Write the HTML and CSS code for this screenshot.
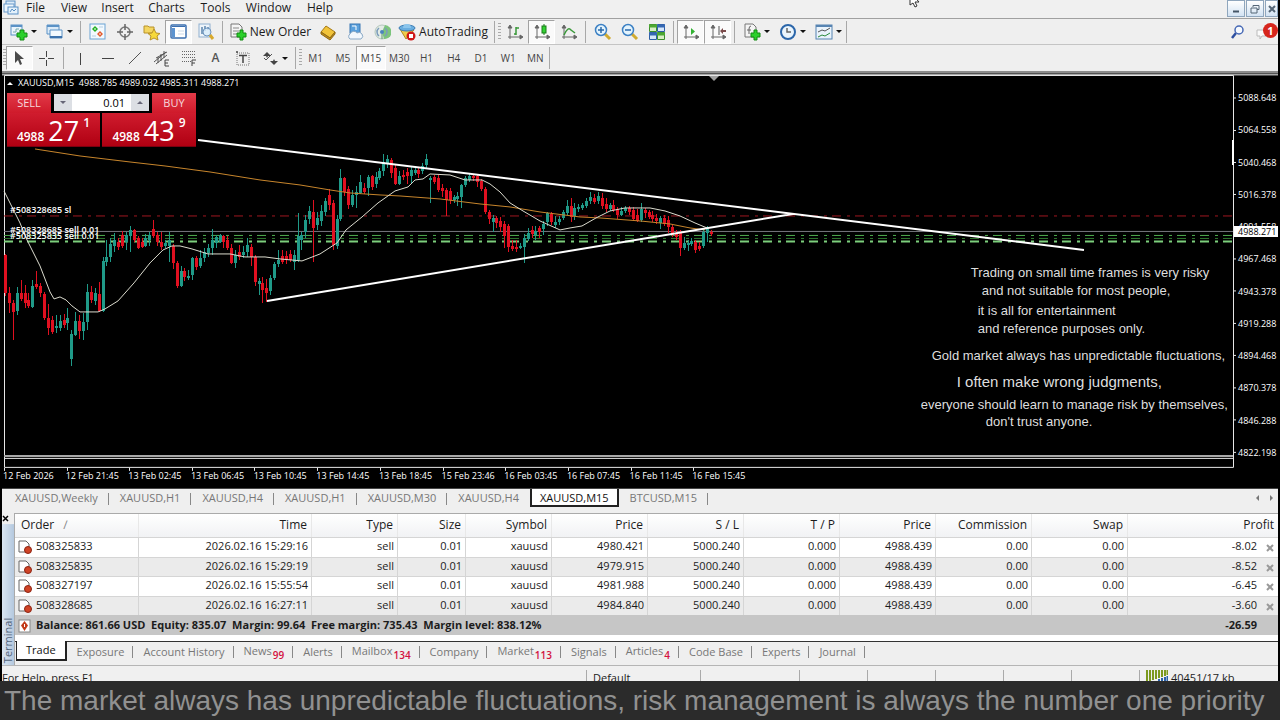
FILE: index.html
```html
<!DOCTYPE html>
<html lang="en">
<head>
<meta charset="utf-8">
<title>XAUUSD,M15</title>
<link rel="stylesheet" href="styles.css">
</head>
<body>
<div class="app">
  <header class="menubar">
    <svg class="logo" width="16" height="16" viewBox="0 0 16 16"><rect x="3" y="1" width="9" height="7" fill="#dcebf8" stroke="#5a8fc4"/><rect x="1" y="4" width="10" height="8" fill="#eef6fc" stroke="#6a9aca"/><rect x="5" y="7" width="10" height="7" fill="#e4f1fb" stroke="#5a8fc4"/><path d="M7 12l2-3 2 2 2-2" fill="none" stroke="#5a8fc4"/></svg>
    <nav class="menus">
      <button>File</button><button>View</button><button>Insert</button><button>Charts</button><button>Tools</button><button>Window</button><button>Help</button>
    </nav>
    <svg class="pointer" width="12" height="8" viewBox="0 0 12 8"><path d="M2 -8V5L5 3L7 7L9 6L7 2H11Z" fill="#fff" stroke="#333"/></svg>
    <div class="winbtns">
      <button aria-label="Minimize"><svg width="10" height="10" viewBox="0 0 10 10"><path d="M2 7.500H8" stroke="#456" stroke-width="2"/></svg></button>
      <button aria-label="Restore"><svg width="10" height="10" viewBox="0 0 10 10"><path d="M3 3V1.500H9V5.500H7M1 4H7V9H1Z" fill="none" stroke="#567"/></svg></button>
      <button aria-label="Close"><svg width="10" height="10" viewBox="0 0 10 10"><path d="M2 2L8 8M8 2L2 8" stroke="#567" stroke-width="2"/></svg></button>
    </div>
  </header>

  <div class="toolbar main-tools">
    <button class="tool drop" aria-label="New chart"><svg width="18" height="18" viewBox="0 0 18 18"><rect x="1" y="2" width="11" height="10" fill="#eaf4fc" stroke="#5b92c6"/><path d="M1 3H12" stroke="#5b92c6" stroke-width="2"/><path d="M3 9h3V6h3" fill="none" stroke="#7aa"/><path d="M10 7H14V10H17V14H14V17H10V14H7V10H10Z" fill="#2bd02b" stroke="#128a12"/></svg><i class="caret"></i></button>
    <button class="tool drop" aria-label="Profiles"><svg width="18" height="18" viewBox="0 0 18 18"><path d="M1 2H13V11H1Z" fill="#dcebf8" stroke="#5b92c6"/><path d="M1 3H13" stroke="#5b92c6" stroke-width="2"/><path d="M4 7H16V15H4Z" fill="#f3f9fe" stroke="#5b92c6"/><path d="M4 14H16" stroke="#3c72ad" stroke-width="2"/></svg><i class="caret"></i></button>
    <i class="sep"></i>
    <button class="tool" aria-label="Market Watch"><svg width="18" height="18" viewBox="0 0 18 18"><rect x="1" y="1" width="15" height="15" fill="#f2f9fe" stroke="#6ba3d4"/><path d="M6 3L9 6L6 9L3 6Z" fill="#22b022"/><path d="M11 8L14 11L11 14L8 11Z" fill="#e25a2c"/><path d="M6 5V7M11 10V12" stroke="#fff"/><path d="M10 4H14M3 13H7" stroke="#b7cfe2"/></svg></button>
    <button class="tool" aria-label="Data Window"><svg width="18" height="18" viewBox="0 0 18 18"><circle cx="9" cy="9" r="5" fill="none" stroke="#777" stroke-width="1.500"/><path d="M9 1V7M9 11V17M1 9H7M11 9H17" stroke="#666" stroke-width="1.500"/></svg></button>
    <button class="tool" aria-label="Navigator"><svg width="18" height="18" viewBox="0 0 18 18"><path d="M1 3H5L6 4H11V10H1Z" fill="#f4d660" stroke="#b8922a"/><path d="M11 6L13 10L17 10.500L14 13L15 17L11 15L7 17L8 13L5 10.500L9 10Z" fill="#f7d93a" stroke="#b8922a"/></svg></button>
    <button class="tool on" aria-label="Terminal"><svg width="18" height="18" viewBox="0 0 18 18"><rect x="1" y="2" width="15" height="13" rx="1" fill="#fff" stroke="#3b6fb0" stroke-width="1.500"/><path d="M2 3.500H15" stroke="#3b6fb0"/><rect x="2" y="5" width="3" height="9" fill="#5c93d0"/><path d="M8 8H14M8 11H14" stroke="#cbd9e8"/></svg></button>
    <button class="tool" aria-label="Strategy Tester"><svg width="18" height="18" viewBox="0 0 18 18"><rect x="2" y="1" width="11" height="13" fill="#eef4fa" stroke="#8fb0d0"/><path d="M5 4V11M8 3V8M11 4V7" stroke="#7fa0c0" stroke-width="2"/><circle cx="10" cy="9" r="4" fill="#d8ecfa" fill-opacity=".8" stroke="#6d94bd"/><path d="M13 12L16 16" stroke="#d8a92c" stroke-width="3"/></svg></button>
    <i class="sep"></i>
    <button class="tool text"><svg width="18" height="18" viewBox="0 0 18 18"><path d="M2 1H10L13 4V14H2Z" fill="#f4f4f4" stroke="#777"/><path d="M4 5H10M4 8H10M4 11H8" stroke="#888"/><path d="M11 7H14V10H17V14H14V17H11V14H8V10H11Z" fill="#2bd02b" stroke="#128a12"/></svg>New Order</button>
    <button class="tool" aria-label="MetaEditor"><svg width="18" height="18" viewBox="0 0 18 18"><path d="M2 9L7 3L16 9L11 15Z" fill="#f2c43a" stroke="#a57916"/><path d="M2 9V11L11 17L16 11V9L11 15Z" fill="#c68f1c" stroke="#8f6a14"/></svg></button>
    <button class="tool" aria-label="Cloud"><svg width="18" height="18" viewBox="0 0 18 18"><rect x="4" y="1" width="10" height="9" fill="#5aa0dc" stroke="#3876b4"/><path d="M6 3H10V7" stroke="#fff" fill="none"/><path d="M4 16A3 3 0 0 1 4 11A4 4 0 0 1 11 10A3 3 0 0 1 15 16Z" fill="#f3f8fd" stroke="#8aa9c6"/></svg></button>
    <button class="tool" aria-label="Signals"><svg width="18" height="18" viewBox="0 0 18 18"><circle cx="9" cy="9" r="7" fill="#e3ebe6" stroke="#b3c6bc"/><path d="M9 9L12 2A7 7 0 0 1 11 16Z" fill="#7cc47c"/><path d="M6 5A5 5 0 0 0 6 13M12 5A5 5 0 0 1 12 13" fill="none" stroke="#7b9bbb" stroke-width="1.500"/><circle cx="9" cy="9" r="2" fill="#4b83bd"/><path d="M9 11V16" stroke="#5f9a6a"/></svg></button>
    <button class="tool text auto"><svg width="18" height="18" viewBox="0 0 18 18"><path d="M2 6L8 16L16 7Z" fill="#f0cd4a" stroke="#b08c22"/><ellipse cx="9" cy="5" rx="8" ry="3" fill="#69aee0" stroke="#3b7cb4"/><path d="M5 5A4 4 0 0 1 13 5Z" fill="#8bc5ec"/><circle cx="13" cy="13" r="4.500" fill="#cf1717"/><rect x="11" y="11" width="4" height="4" fill="#fff"/></svg>AutoTrading</button>
    <i class="sep"></i><i class="grip"></i>
    <button class="tool" aria-label="Bar chart"><svg width="18" height="18" viewBox="0 0 18 18"><path d="M4 3V16M2 14H16M4 2L2 5H6ZM17 14L14 12V16Z" fill="#666" stroke="#666"/><path d="M10 4V12M10 5H13M8 11H10" stroke="#3a993a" stroke-width="1.500"/></svg></button>
    <button class="tool on" aria-label="Candlesticks"><svg width="18" height="18" viewBox="0 0 18 18"><path d="M4 3V16M2 14H16M4 2L2 5H6ZM17 14L14 12V16Z" fill="#666" stroke="#666"/><path d="M11 1V12" stroke="#187a18"/><rect x="9" y="3" width="4" height="7" fill="#32d232" stroke="#187a18"/></svg></button>
    <button class="tool" aria-label="Line chart"><svg width="18" height="18" viewBox="0 0 18 18"><path d="M4 3V16M2 14H16M4 2L2 5H6ZM17 14L14 12V16Z" fill="#666" stroke="#666"/><path d="M4 12Q8 3 11 7L15 10" fill="none" stroke="#3a993a" stroke-width="1.500"/></svg></button>
    <i class="sep"></i>
    <button class="tool" aria-label="Zoom in"><svg width="18" height="18" viewBox="0 0 18 18"><path d="M11 11L16 16" stroke="#d1ab2f" stroke-width="3"/><circle cx="7" cy="7" r="5.500" fill="#e4f4fd" stroke="#3c80c4" stroke-width="1.500"/><path d="M4 7H10M7 4V10" stroke="#2a69ab" stroke-width="1.500"/></svg></button>
    <button class="tool" aria-label="Zoom out"><svg width="18" height="18" viewBox="0 0 18 18"><path d="M11 11L16 16" stroke="#d1ab2f" stroke-width="3"/><circle cx="7" cy="7" r="5.500" fill="#e4f4fd" stroke="#3c80c4" stroke-width="1.500"/><path d="M4 7H10" stroke="#2a69ab" stroke-width="1.500"/></svg></button>
    <button class="tool" aria-label="Tile windows"><svg width="18" height="18" viewBox="0 0 18 18"><path d="M1.500 1.500H8.500V8.500H1.500ZM9.500 9.500H16.500V16.500H9.500Z" fill="#d7efc5" stroke="#3c8f2c"/><path d="M1 3H9M9 11H17" stroke="#4ca832" stroke-width="3"/><path d="M9.500 1.500H16.500V8.500H9.500ZM1.500 9.500H8.500V16.500H1.500Z" fill="#d5e6fa" stroke="#2e5ea4"/><path d="M9 3H17M1 11H9" stroke="#3467b2" stroke-width="3"/></svg></button>
    <i class="sep"></i>
    <button class="tool on" aria-label="Auto scroll"><svg width="18" height="18" viewBox="0 0 18 18"><path d="M4 3V16M2 14H16M4 2L2 5H6ZM17 14L14 12V16Z" fill="#666" stroke="#666"/><path d="M9 5L13 8.500L9 12Z" fill="#32b232"/></svg></button>
    <button class="tool on" aria-label="Chart shift"><svg width="18" height="18" viewBox="0 0 18 18"><path d="M4 3V16M2 14H16M4 2L2 5H6ZM17 14L14 12V16Z" fill="#666" stroke="#666"/><path d="M10 3V12" stroke="#555"/><path d="M11 8L14 5V7H17V9H14V11Z" fill="#7a4a4a"/></svg></button>
    <i class="sep"></i>
    <button class="tool drop" aria-label="Indicators"><svg width="18" height="18" viewBox="0 0 18 18"><path d="M2 1H10L13 4V14H2Z" fill="#f4f4f4" stroke="#777"/><path d="M8 3Q6 3 6 6V11M4 7H8" fill="none" stroke="#666"/><path d="M11 7H14V10H17V14H14V17H11V14H8V10H11Z" fill="#2bd02b" stroke="#128a12"/></svg><i class="caret"></i></button>
    <button class="tool drop" aria-label="Periods"><svg width="18" height="18" viewBox="0 0 18 18"><circle cx="9" cy="9" r="7" fill="#eaf5fd" stroke="#2b66aa" stroke-width="2"/><path d="M8 5V9H12" fill="none" stroke="#666" stroke-width="1.500"/></svg><i class="caret"></i></button>
    <button class="tool drop" aria-label="Templates"><svg width="18" height="18" viewBox="0 0 18 18"><rect x="1" y="2" width="16" height="14" fill="#eaf3fb" stroke="#5784b2"/><path d="M1 3H17" stroke="#5784b2" stroke-width="2"/><path d="M3 9L7 7L10 8L15 5" fill="none" stroke="#555"/><path d="M3 14L7 12L10 13L15 10" fill="none" stroke="#2a8a3a"/></svg><i class="caret"></i></button>
    <i class="sep end"></i>
    <div class="right-tools">
      <button class="tool" aria-label="Search"><svg width="18" height="18" viewBox="0 0 18 18"><path d="M7 10L3 15" stroke="#2d4fa0" stroke-width="2.500"/><circle cx="10" cy="7" r="4" fill="#f6faff" stroke="#4668b4" stroke-width="1.500"/></svg></button>
      <button class="tool notes" aria-label="Notifications"><svg width="18" height="18" viewBox="0 0 18 18"><path d="M1 7H10V13H6L4 16V13H1Z" fill="#fafafa" stroke="#bbb"/></svg><b class="badge">1</b></button>
    </div>
  </div>

  <div class="toolbar draw-tools">
    <i class="grip"></i>
    <button class="tool on" aria-label="Cursor"><svg width="18" height="18" viewBox="0 0 18 18"><path d="M4 2V14L7 11L9 16L11 15L9 10H13Z" fill="#4a4a4a"/></svg></button>
    <button class="tool" aria-label="Crosshair"><svg width="18" height="18" viewBox="0 0 18 18"><path d="M8.500 2V8M8.500 11V17M1 9.500H7M10 9.500H16" stroke="#444"/></svg></button>
    <i class="sep"></i>
    <button class="tool" aria-label="Vertical line"><svg width="18" height="18" viewBox="0 0 18 18"><path d="M8.500 4V16" stroke="#444"/></svg></button>
    <button class="tool" aria-label="Horizontal line"><svg width="18" height="18" viewBox="0 0 18 18"><path d="M3 9.500H15" stroke="#444"/></svg></button>
    <button class="tool" aria-label="Trendline"><svg width="18" height="18" viewBox="0 0 18 18"><path d="M3 15L15 3" stroke="#555"/></svg></button>
    <button class="tool" aria-label="Channel"><svg width="18" height="18" viewBox="0 0 18 18"><path d="M1 13L13 3M3 15L14 6M3 9L14 3M5 14V8M8 12V5M11 9V2" stroke="#555"/><path d="M16 11H12V17H16M12 14H15" fill="none" stroke="#444"/></svg></button>
    <button class="tool" aria-label="Fibonacci"><svg width="18" height="18" viewBox="0 0 18 18"><path d="M2 2.500H16M2 5.500H16M2 8.500H16M2 12.500H11" stroke="#666" stroke-dasharray="1 1"/><path d="M16 11H12V17M12 14H15" fill="none" stroke="#444"/></svg></button>
    <button class="tool letter">A</button>
    <button class="tool" aria-label="Text label"><svg width="18" height="18" viewBox="0 0 18 18"><rect x="3" y="4" width="12" height="12" fill="none" stroke="#777" stroke-dasharray="1 1"/><path d="M5 6.500H13M9 6V14M2 3H4" stroke="#444" stroke-width="1.500"/></svg></button>
    <button class="tool drop" aria-label="Arrows"><svg width="18" height="18" viewBox="0 0 18 18"><path d="M6 3L10 7H7L6 9L5 7H2Z" fill="#444"/><path d="M3 9L5 11L11 5" fill="none" stroke="#555"/><path d="M9 12H12L13 10L14 12H17L13 16Z" fill="#444"/></svg><i class="caret"></i></button>
    <i class="sep"></i><i class="grip"></i>
    <div class="periods">
      <button>M1</button><button>M5</button><button class="on">M15</button><button>M30</button><button>H1</button><button>H4</button><button>D1</button><button>W1</button><button>MN</button>
    </div>
    <i class="sep end"></i>
  </div>

  <main class="chart">
    <svg class="plot" viewBox="2 73 1276 415" preserveAspectRatio="none">
      <path class="edge" d="M2 74.500H1278"/>
      <path class="frame" d="M4.500 467.500V75.500H1233.500V467.500ZM4 458.500H1233"/>
      <path class="edge" d="M4 456H1233"/>
      <path d="M1233 140V165" stroke="#fff" stroke-width="2"/>
      <path d="M709 76H719L714 81Z" fill="#a0a0a0"/>
      <path class="frame" d="M1234 98H1236M1234 130.500H1236M1234 162.500H1236M1234 194.500H1236M1234 227H1236M1234 259H1236M1234 291H1236M1234 323.500H1236M1234 355.500H1236M1234 388H1236M1234 420H1236M1234 452.500H1236M4.500 468V471M67.500 468V471M129.500 468V471M192.500 468V471M254.500 468V471M317.500 468V471M380.500 468V471M443.500 468V471M505.500 468V471M568.500 468V471M631.500 468V471M693.500 468V471"/>
      <path d="M4 231.500H1233" stroke="#77777f"/>
      <path class="level stop" d="M4 216H1233"/>
      <path class="level open" d="M4 235.500H1233"/>
      <path class="level open dim" d="M4 238.500H1233"/>
      <path class="level open strong" d="M4 241.500H1233"/>
      <g id="candles"></g>
      <polyline class="ma slow" points="35,149 80,156 130,162 165,166 210,172 260,180 300,185 330,190 350,193 380,195 400,196 440,199 480,204 510,207 540,212 580,217 600,218 640,221 670,224 690,228 705,230"/>
      <polyline class="ma" points="4,191 20,223 27,240 40,266 50,292 54,299 60,297 66,300 72,306 80,312 98,312 105,309 118,301 134,283 150,263 163,250 172,246 180,246 192,249 208,254 230,254 245,257 265,257 280,259 302,261 320,254 337,243 346,230 362,217 378,203 395,191 408,187 415,180 423,179 430,174 450,175 465,180 482,180 490,184 500,192 510,203 523,211 540,221 560,230 570,228 582,226 596,218 610,211 625,208 650,208 665,211 680,216 695,223 707,228"/>
      <path class="trend" d="M198 140L1084 250M267 301L793 214"/>
    </svg>
    <div class="quote"><i class="up"></i><span>XAUUSD,M15&nbsp; 4988.785 4989.032 4985.311 4988.271</span></div>
    <form class="trade">
      <button type="button" class="side">SELL</button>
      <div class="volume">
        <button type="button" aria-label="Less"><i class="mini down"></i></button>
        <input type="text" value="0.01" aria-label="Volume">
        <button type="button" aria-label="More"><i class="mini up"></i></button>
      </div>
      <button type="button" class="side">BUY</button>
      <button type="button" class="price"><small>4988</small><span>27</span><sup>1</sup></button>
      <button type="button" class="price buy"><small>4988</small><span>43</span><sup>9</sup></button>
    </form>
    <span class="order sl">#508328685 sl</span>
    <span class="order first">#508328685 sell 0.01</span>
    <span class="order second">#508325835 sell 0.01</span>
    <div class="notice">
      <p class="n1">Trading on small time frames is very risky</p>
      <p class="n2">and not suitable for most people,</p>
      <p class="n3">it is all for entertainment</p>
      <p class="n4">and reference purposes only.</p>
      <p class="n5">Gold market always has unpredictable fluctuations,</p>
      <p class="n6">I often make wrong judgments,</p>
      <p class="n7">everyone should learn to manage risk by themselves,</p>
      <p class="n8">don't trust anyone.</p>
    </div>
    <div class="prices">
      <span>5088.648</span><span>5064.558</span><span>5040.468</span><span>5016.378</span><span>4991.558</span><span>4967.468</span><span>4943.378</span><span>4919.288</span><span>4894.468</span><span>4870.378</span><span>4846.288</span><span>4822.198</span>
      <b class="last">4988.271</b>
    </div>
    <div class="times">
      <span>12 Feb 2026</span><span>12 Feb 21:45</span><span>13 Feb 02:45</span><span>13 Feb 06:45</span><span>13 Feb 10:45</span><span>13 Feb 14:45</span><span>13 Feb 18:45</span><span>15 Feb 23:46</span><span>16 Feb 03:45</span><span>16 Feb 07:45</span><span>16 Feb 11:45</span><span>16 Feb 15:45</span>
    </div>
  </main>

  <nav class="chart-tabs">
    <button>XAUUSD,Weekly</button><button>XAUUSD,H1</button><button>XAUUSD,H4</button><button>XAUUSD,H1</button><button>XAUUSD,M30</button><button>XAUUSD,H4</button><button class="active">XAUUSD,M15</button><button>BTCUSD,M15</button>
    <div class="scrollers"><i class="arrow left"></i><i class="arrow right"></i></div>
  </nav>

  <section class="terminal">
    <aside class="handle"><button aria-label="Close terminal"><svg width="7" height="7" viewBox="0 0 7 7"><path d="M1 1L6 6M6 1L1 6" stroke="#000" stroke-width="1.500"/></svg></button><span>Terminal</span></aside>
    <div class="panel">
      <table>
        <colgroup><col class="c-order"><col class="c-time"><col class="c-mid"><col class="c-size"><col class="c-mid"><col class="c-num"><col class="c-num"><col class="c-num"><col class="c-num"><col class="c-num"><col class="c-num"><col></colgroup>
        <thead><tr><th>Order <i class="sort">∕</i></th><th>Time</th><th>Type</th><th>Size</th><th>Symbol</th><th>Price</th><th>S / L</th><th>T / P</th><th>Price</th><th>Commission</th><th>Swap</th><th>Profit</th></tr></thead>
        <tbody id="orders"></tbody>
        <tfoot><tr><td colspan="11"><svg width="14" height="14" viewBox="0 0 14 14"><rect x="1" y="1" width="11" height="12" fill="#fff" stroke="#888"/><path d="M6.500 2L10 6.500L6.500 12L3 6.500Z" fill="#c33a18"/><path d="M6.500 5V8" stroke="#fff"/></svg><span>Balance: 861.66 USD&nbsp; Equity: 835.07&nbsp; Margin: 99.64&nbsp; Free margin: 735.43&nbsp; Margin level: 838.12%</span></td><td>-26.59</td></tr></tfoot>
      </table>
      <nav class="terminal-tabs">
        <button class="active">Trade</button><button>Exposure</button><button>Account History</button><button>News<sub>99</sub></button><button>Alerts</button><button>Mailbox<sub>134</sub></button><button>Company</button><button>Market<sub>113</sub></button><button>Signals</button><button>Articles<sub>4</sub></button><button>Code Base</button><button>Experts</button><button>Journal</button>
      </nav>
    </div>
  </section>

  <div class="status">
    <span class="help">For Help, press F1</span><span class="profile">Default</span><span class="s3"></span><span class="s2"></span><span class="s2"></span><span class="s2"></span><span class="s2"></span><span class="s2"></span>
    <span class="net"><svg width="22" height="14" viewBox="0 0 22 14"><path d="M1 0V12M4 0V11M7 0V10M10 0V9M13 0V8M16 0V7M19 0V6M21.500 0V5" stroke="#7c9a1e" stroke-width="2"/><path d="M10 14V11M13 14V9M16 14V8M19 14V7M21.500 14V6" stroke="#2c62a8" stroke-width="2"/></svg>40451/17 kb</span>
  </div>
</div>
<footer class="ticker">The market always has unpredictable fluctuations, risk management is always the number one priority</footer>
<script src="app.js"></script>
</body>
</html>
```
FILE: styles.css
```css
* { box-sizing: border-box; }
body { margin: 0; height: 100vh; min-height: 720px; display: flex; flex-direction: column; overflow: hidden; background: #000; font: 12px/16px "Open Sans", "Noto Sans", sans-serif; color: #1c1c1c; }
button { margin: 0; padding: 0; border: 0; background: none; font: inherit; color: inherit; white-space: nowrap; }
svg { display: block; flex: none; }
.app { flex: 1; min-height: 0; display: flex; flex-direction: column; padding: 0 2px; overflow: hidden; }

.menubar { height: 19px; flex: none; display: flex; align-items: flex-start; background: #f0f0f0; border-bottom: 1px solid #a0a0a0; position: relative; }
.logo { margin-left: 1px; }
.menus { display: grid; grid-template-columns: 33px 44px 43px 55px 43px 63px 40px; flex: 1; justify-items: center; }
.pointer { position: absolute; left: 71%; top: 0; }
.winbtns { display: flex; gap: 1px; }
.winbtns button { width: 18px; height: 17px; border: 1px solid #8fa6bd; background: linear-gradient(#fff, #d3e3f3); display: grid; place-items: center; }
.winbtns button:last-child { width: 13px; overflow: hidden; }

.toolbar { height: 26px; flex: none; display: flex; align-items: center; background: #efefef; border-bottom: 1px solid #c4c4c4; }
.main-tools { padding-left: 3px; }
.draw-tools { height: 28px; padding-left: 1px; border-bottom: 2px solid #8c8c8c; }
.tool { width: 27px; height: 24px; flex: none; display: flex; align-items: center; justify-content: center; }
.drop { width: 36px; gap: 3px; }
.on { background: #fafafa; border: 1px solid #a2a2a2; border-right-color: #fff; border-bottom-color: #fff; }
.text { width: 88px; gap: 3px; }
.auto { width: 96px; }
.caret { border: 3px solid transparent; border-top-color: #111; border-bottom: 0; }
.sep { width: 1px; height: 22px; margin: 0 3px; background: #a8a8a8; flex: none; }
.end { margin-left: 0; }
.grip { width: 3px; height: 18px; flex: none; background: repeating-linear-gradient(#aaa 0 1px, #efefef 1px 3px); }
.right-tools { margin-left: auto; display: flex; }
.notes { position: relative; }
.badge { position: absolute; right: 0; top: 3px; width: 15px; height: 15px; border-radius: 8px; background: #d6261c; color: #fff; font-size: 11px; line-height: 15px; }
.letter { font-weight: 600; color: #555; }
.periods { width: 247px; height: 24px; display: flex; font-size: 10px; color: #444; }
.periods button { flex: 1; }

.chart { flex: 1; min-height: 380px; position: relative; background: #000; color: #fff; font-size: 9px; line-height: 12px; }
.plot { position: absolute; width: 100%; height: 100%; fill: none; }
.edge { stroke: #a8a8a8; stroke-width: 2; }
.frame { stroke: #e8e8e8; }
.level { stroke-dasharray: 9 6 3 5; }
.stop { stroke: #a01620; stroke-width: 1; }
.open { stroke: #4fae4f; }
.dim { stroke: #2f7a2f; }
.strong { stroke: #7ccf7c; stroke-width: 2; }
.rise { fill: #1f9a88; }
.fall { fill: #e01020; }
.ma { stroke: #dcdccf; }
.slow { stroke: #c8862c; }
.trend { stroke: #fff; stroke-width: 2; }
.quote { position: absolute; left: 5px; top: 4px; display: flex; align-items: center; gap: 5px; }
.quote .up { border: 3px solid transparent; border-bottom-color: #fff; border-top: 0; }
.trade { position: absolute; left: 5px; top: 20px; width: 189px; display: grid; grid-template-columns: 44px 50px 51px 44px; grid-template-rows: 20px 34px; }
.side { background: linear-gradient(#e23a48, #cf1a2b); color: #f6d9dc; font-size: 11px; }
.volume { grid-column: span 2; display: flex; margin: 1px 3px 2px; background: #fff; font-size: 11px; }
.volume button { width: 18px; background: #dcdfe4; display: grid; place-items: center; flex: none; }
.volume input { flex: 1; min-width: 0; border: 0; padding: 0 6px; font: inherit; text-align: right; }
.mini { border: 3px solid transparent; }
.mini.down { border-top-color: #667; border-bottom: 0; }
.mini.up { border-bottom-color: #667; border-top: 0; }
.price { grid-column: span 2; display: flex; justify-content: center; margin-right: 1px; background: linear-gradient(#d01c2e, #b00012); color: #fff; border-bottom: 1px solid #7c0010; }
.price.buy { margin: 0 0 0 1px; }
.price small { font-size: 12px; line-height: 16px; font-weight: 600; margin-top: 16px; }
.price span { font-size: 27px; line-height: 36px; margin: 0 4px; }
.price sup { font-size: 12px; line-height: 16px; font-weight: 600; margin-top: 2px; }
.order { position: absolute; left: 8px; font-weight: 600; }
.sl { top: 131px; }
.first { top: 151px; }
.second { top: 157px; }
.notice { position: absolute; left: 72%; top: 191px; font: 13px/18px "Liberation Sans", sans-serif; color: #dedede; white-space: nowrap; }
.notice p { margin: 0; }
.n1 { padding-left: 50px; }
.n2 { padding-left: 61px; }
.notice .n3 { padding-left: 57px; margin-top: 2px; }
.n4 { padding-left: 57px; }
.notice .n5 { padding-left: 11px; margin-top: 9px; }
.notice .n6 { padding-left: 36px; margin-top: 8px; font-size: 15px; }
.notice .n7 { margin-top: 6px; line-height: 16px; }
.n8 { padding-left: 65px; }
.prices { position: absolute; right: 0; top: 19px; bottom: 29px; width: 40px; display: flex; flex-direction: column; justify-content: space-between; }
.last { position: absolute; left: -4px; right: 0; top: 134px; padding-left: 4px; height: 11px; line-height: 11px; background: #fff; color: #000; font-weight: 400; }
.times { position: absolute; left: 1px; right: 0; bottom: 6px; display: flex; }
.times span { width: 4.915%; white-space: nowrap; }

.chart-tabs { height: 25px; flex: none; display: flex; align-items: flex-start; padding-left: 2px; background: #efefef; border-top: 1px solid #444; color: #777; font-size: 11px; }
.chart-tabs button { height: 18px; padding: 0 11px; position: relative; line-height: 18px; }
.chart-tabs button:not(.active)::after, .terminal-tabs button:not(.active)::after { content: ""; position: absolute; right: 0; top: 4px; height: 12px; width: 1px; background: #888; }
.chart-tabs button:nth-child(6)::after { display: none; }
.chart-tabs .active { background: #fff; color: #111; border: 2px solid #222; border-top: 0; padding: 0 8px; }
.scrollers { margin-left: auto; display: flex; gap: 11px; padding: 6px 2px; }
.arrow { border: 3px solid transparent; }
.left { border-right-color: #777; }
.right { border-left-color: #777; }

.terminal { flex: none; display: flex; background: #efefef; border-bottom: 1px solid #b5b5b5; }
.handle { width: 12px; display: flex; flex-direction: column; flex: none; }
.handle button { height: 11px; }
.handle span { flex: 1; writing-mode: vertical-rl; transform: rotate(180deg); background: linear-gradient(90deg, #b4c8de, #dae6f2); color: #53647a; line-height: 12px; font-size: 11px; padding-top: 2px; }
.panel { flex: 1; min-width: 0; background: #fff; border-left: 1px solid #aaa; border-top: 1px solid #aaa; }
table { width: 100%; table-layout: fixed; border-collapse: separate; border-spacing: 0; }
.c-order { width: 124px; }
.c-time { width: 173px; }
.c-mid { width: 86px; }
.c-size { width: 68px; }
.c-num { width: 96px; }
th, td { padding: 0 3px 0 6px; text-align: right; font-weight: 400; white-space: nowrap; border-right: 1px solid #d5d5d5; }
th { height: 23px; padding-right: 4px; border-right-color: #e8e8e8; background: linear-gradient(#fff, #f1f2f4); }
th:first-child { text-align: left; }
.sort { margin-left: 6px; color: #888; font-style: normal; }
td { height: 20px; font-size: 11px; border-top: 1px solid #d5d5d5; line-height: 16px; padding-bottom: 2px; }
tbody tr:nth-child(even) { background: #ebebeb; }
tbody tr:nth-child(even) td { height: 19px; }
td:first-child { text-align: left; padding-left: 3px; }
td svg { display: inline-block; vertical-align: middle; margin-right: 4px; }
th:last-child, td:last-child { border-right: 0; }
td:last-child { padding-right: 21px; position: relative; }
.remove { position: absolute; right: 4px; top: 6px; }
.remove svg { display: block; margin: 0; }
tfoot td { background: #c6c6c6; font-weight: 700; border: 0; padding-bottom: 0; }
.terminal-tabs { display: flex; height: 24px; margin-top: 6px; background: #efefef; border-top: 1px solid #333; color: #777; font-size: 11px; }
.terminal-tabs button { position: relative; height: 19px; padding: 0 9px 0 10px; }
.terminal-tabs .active { margin: -1px 0 0 1px; height: 20px; padding: 0 9px; background: #fff; color: #111; border: solid #222; border-width: 0 2px 2px 1px; }
.terminal-tabs sub { margin-left: 1px; font-size: 10px; line-height: 10px; font-weight: 600; color: #d3123f; vertical-align: -4px; }

.status { height: 15px; flex: none; display: flex; background: #f0f0f0; padding-top: 4px; font-size: 11px; }
.status span { flex: none; padding-left: 6px; border-left: 1px solid #aaa; white-space: nowrap; }
.status .help { flex: 1; padding-left: 0; border: 0; }
.profile { width: 114px; }
.s3 { width: 99px; }
.s2 { width: 68px; }
.net { width: 139px; display: flex; gap: 3px; }
.ticker { height: 39px; flex: none; padding-left: 4px; overflow: hidden; background: #2b2b2b; color: #919191; font: 28px/40px "Liberation Sans", sans-serif; white-space: nowrap; }
```
FILE: app.js
```js
// Candles in time order: high, open/close top, open/close bottom, low, direction
const candles = `254 255 293 296 r|287 293 303 313 r|300 303 312 340 r|287 293 311 315 g|280 293 299 301 r|285 293 303 308 r|293 300 306 308 r|280 286 307 308 g|271 284 287 289 r|283 286 293 297 r|292 294 318 320 r|304 318 328 335 r|316 320 332 334 r|315 326 328 333 g|315 321 328 331 g|314 320 325 328 r|308 318 323 330 g|330 334 359 366 g|312 321 335 336 g|315 321 331 339 r|313 322 331 340 g|284 292 322 330 g|286 292 300 303 r|288 293 301 305 g|282 294 311 312 r|257 261 311 312 g|240 257 262 266 g|238 244 257 262 g|233 240 246 252 g|238 242 247 250 r|231 235 246 248 r|232 235 242 250 g|226 230 236 252 g|229 230 240 242 r|236 238 248 249 r|238 242 247 248 r|234 238 246 247 g|232 235 240 246 g|220 229 236 238 r|232 235 242 246 r|232 242 247 250 r|240 243 246 248 g|232 240 246 262 g|244 246 263 269 r|261 263 286 288 r|266 271 286 287 g|268 271 277 281 r|270 276 278 280 g|257 258 275 280 g|256 258 267 270 r|250 258 266 268 g|248 252 258 262 g|244 248 253 257 g|229 240 248 255 g|235 237 243 248 g|234 235 242 243 g|235 236 242 248 r|236 240 248 250 r|244 248 263 264 r|250 255 263 268 g|245 252 257 260 r|246 252 255 258 g|238 245 252 257 g|244 247 257 266 r|255 257 282 286 r|278 281 284 295 g|277 283 290 303 r|279 288 293 302 r|275 278 291 295 g|262 264 278 280 g|250 260 264 267 g|250 256 262 264 r|251 256 260 264 r|250 254 260 262 r|250 255 262 270 g|213 236 260 262 g|232 235 240 250 g|215 220 232 238 g|206 211 219 224 g|200 212 228 262 r|212 218 225 230 g|205 211 221 226 g|198 201 212 216 g|189 195 205 210 r|200 203 245 250 r|215 219 246 249 g|169 178 219 221 g|177 178 192 196 r|186 189 205 209 r|190 195 205 207 g|186 192 195 208 g|175 182 193 194 g|183 188 192 194 r|175 177 188 196 g|175 176 187 190 r|172 177 184 188 g|168 171 178 180 g|154 162 171 176 g|155 159 163 168 g|158 160 173 178 r|165 168 184 185 r|171 176 184 185 g|170 175 177 180 r|168 172 176 184 r|166 170 176 184 g|168 170 173 175 g|168 170 174 178 r|163 166 171 174 g|154 159 165 168 g|176 178 180 203 g|175 177 182 184 r|175 178 190 192 r|184 188 191 197 r|188 190 200 216 r|188 191 200 204 r|195 197 200 203 g|192 196 199 206 g|184 185 197 208 g|176 178 185 187 g|174 176 180 182 g|174 176 178 181 r|175 176 182 187 r|179 181 189 191 r|187 189 212 214 r|210 212 219 224 r|215 218 222 232 g|216 218 223 228 r|217 221 227 232 r|221 224 236 248 r|224 226 247 252 r|240 246 249 251 r|240 247 249 252 r|243 246 248 249 g|234 238 247 263 g|228 233 239 241 g|226 230 234 238 r|226 231 235 240 g|226 228 232 238 r|221 224 229 235 g|212 213 222 226 g|212 214 222 225 r|216 222 225 228 g|216 219 222 225 g|210 212 218 220 g|200 206 213 215 g|198 206 217 222 r|203 208 216 220 g|204 207 209 212 g|203 205 208 210 g|198 201 206 208 g|192 197 201 204 g|194 198 202 204 r|192 196 201 204 g|193 198 206 209 r|198 204 209 212 r|203 205 209 211 g|200 205 210 212 r|207 209 215 219 r|207 211 215 216 g|206 208 211 213 g|206 208 212 215 r|207 210 219 221 r|209 215 221 222 r|203 209 220 222 g|208 210 213 218 r|210 212 217 219 r|211 215 219 222 r|214 218 221 224 r|216 218 223 229 g|215 218 224 226 r|216 220 227 233 r|225 227 235 237 r|230 233 237 240 r|230 232 248 256 r|237 243 248 250 g|240 243 245 251 g|238 241 244 246 g|240 242 250 253 r|242 246 249 251 r|228 232 246 248 g|226 229 233 242 g|230 232 234 236 r`;
const step = 3.9;
document.getElementById("candles").innerHTML = candles.split("|").map((row, i) => {
  const [high, top, bottom, low, dir] = row.split(" ");
  const x = Math.round(4 + i * step);
  return `<path class="${dir === "g" ? "rise" : "fall"}" d="M${x + 1} ${high}h1V${low}h-1ZM${x} ${top}h3V${bottom}h-3Z"/>`;
}).join("");

const orders = [
  ["508325833", "2026.02.16 15:29:16", "4980.421", "-8.02"],
  ["508325835", "2026.02.16 15:29:19", "4979.915", "-8.52"],
  ["508327197", "2026.02.16 15:55:54", "4981.988", "-6.45"],
  ["508328685", "2026.02.16 16:27:11", "4984.840", "-3.60"]
];
const page = '<svg width="14" height="14" viewBox="0 0 14 14"><path d="M1 1H8L11 4V12H1Z" fill="#fff" stroke="#666"/><circle cx="10" cy="10" r="3.500" fill="#d04426" stroke="#8c2412"/></svg>';
const cross = '<button class="remove" aria-label="Close order"><svg width="8" height="8" viewBox="0 0 8 8"><path d="M1 1L7 7M7 1L1 7" stroke="#999" stroke-width="2"/></svg></button>';
document.getElementById("orders").innerHTML = orders.map(([id, time, price, profit]) =>
  `<tr><td>${page}${id}</td>` + [time, "sell", "0.01", "xauusd", price, "5000.240", "0.000", "4988.439", "0.00", "0.00"].map(v => `<td>${v}</td>`).join("") + `<td>${profit}${cross}</td></tr>`
).join("");
```
